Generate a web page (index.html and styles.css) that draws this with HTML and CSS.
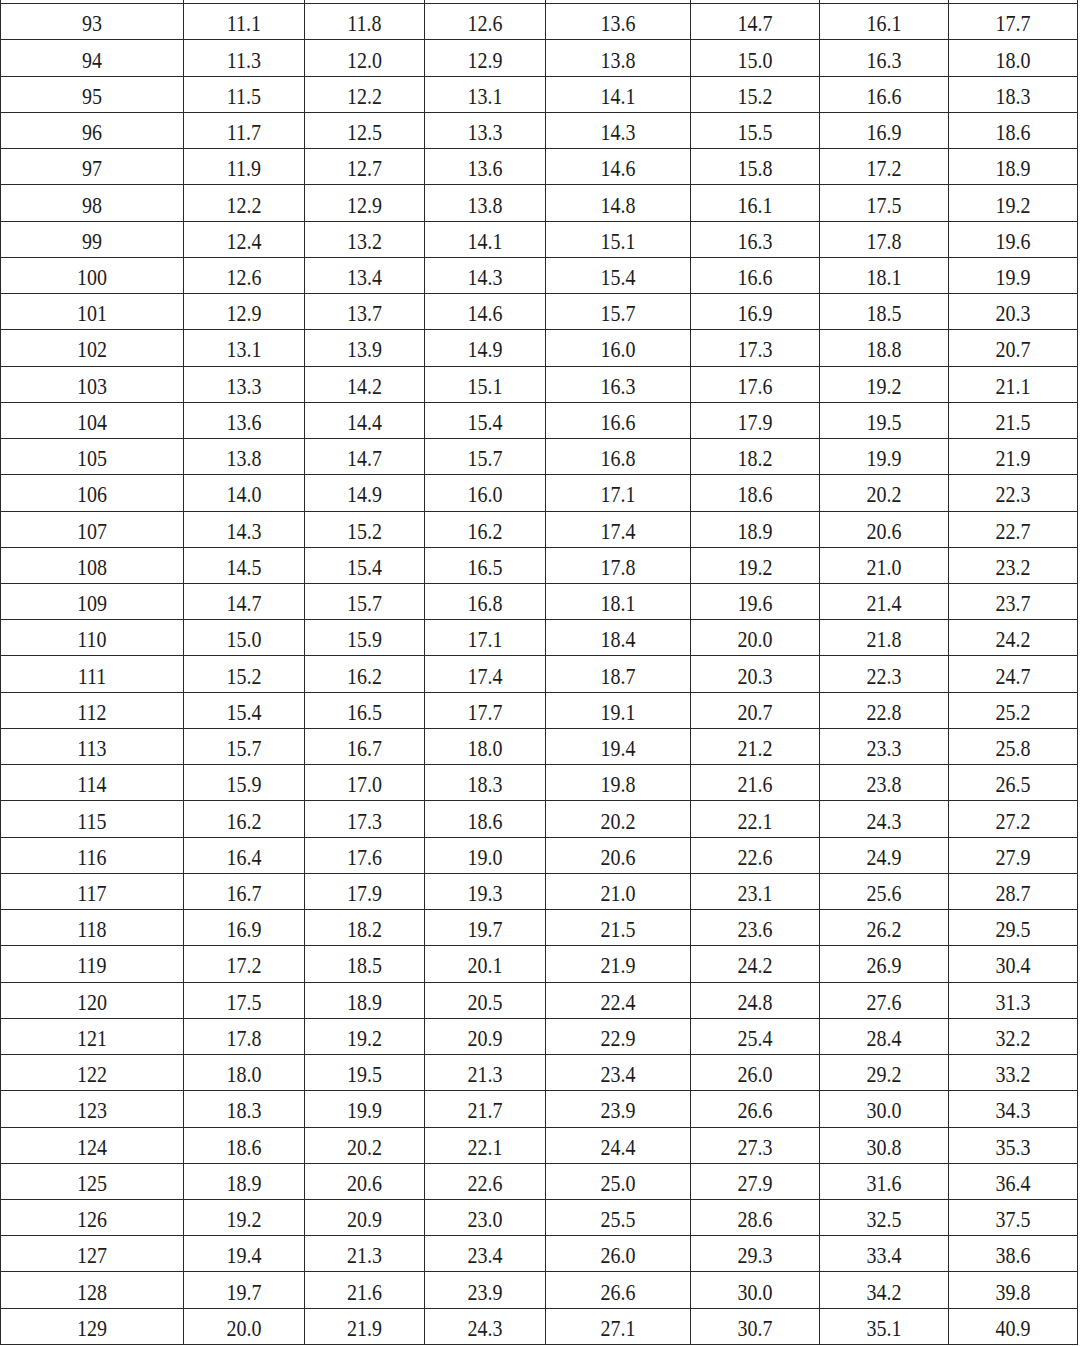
FILE: index.html
```html
<!DOCTYPE html>
<html>
<head>
<meta charset="utf-8">
<link rel="stylesheet" href="styles.css">
</head>
<body>
<div class="table">
<div class="c"></div><div class="c"></div><div class="c"></div><div class="c"></div><div class="c"></div><div class="c"></div><div class="c"></div><div class="c"></div>
<div class="c"><span>93</span></div><div class="c"><span>11.1</span></div><div class="c"><span>11.8</span></div><div class="c"><span>12.6</span></div><div class="c"><span>13.6</span></div><div class="c"><span>14.7</span></div><div class="c"><span>16.1</span></div><div class="c"><span>17.7</span></div>
<div class="c"><span>94</span></div><div class="c"><span>11.3</span></div><div class="c"><span>12.0</span></div><div class="c"><span>12.9</span></div><div class="c"><span>13.8</span></div><div class="c"><span>15.0</span></div><div class="c"><span>16.3</span></div><div class="c"><span>18.0</span></div>
<div class="c"><span>95</span></div><div class="c"><span>11.5</span></div><div class="c"><span>12.2</span></div><div class="c"><span>13.1</span></div><div class="c"><span>14.1</span></div><div class="c"><span>15.2</span></div><div class="c"><span>16.6</span></div><div class="c"><span>18.3</span></div>
<div class="c"><span>96</span></div><div class="c"><span>11.7</span></div><div class="c"><span>12.5</span></div><div class="c"><span>13.3</span></div><div class="c"><span>14.3</span></div><div class="c"><span>15.5</span></div><div class="c"><span>16.9</span></div><div class="c"><span>18.6</span></div>
<div class="c"><span>97</span></div><div class="c"><span>11.9</span></div><div class="c"><span>12.7</span></div><div class="c"><span>13.6</span></div><div class="c"><span>14.6</span></div><div class="c"><span>15.8</span></div><div class="c"><span>17.2</span></div><div class="c"><span>18.9</span></div>
<div class="c"><span>98</span></div><div class="c"><span>12.2</span></div><div class="c"><span>12.9</span></div><div class="c"><span>13.8</span></div><div class="c"><span>14.8</span></div><div class="c"><span>16.1</span></div><div class="c"><span>17.5</span></div><div class="c"><span>19.2</span></div>
<div class="c"><span>99</span></div><div class="c"><span>12.4</span></div><div class="c"><span>13.2</span></div><div class="c"><span>14.1</span></div><div class="c"><span>15.1</span></div><div class="c"><span>16.3</span></div><div class="c"><span>17.8</span></div><div class="c"><span>19.6</span></div>
<div class="c"><span>100</span></div><div class="c"><span>12.6</span></div><div class="c"><span>13.4</span></div><div class="c"><span>14.3</span></div><div class="c"><span>15.4</span></div><div class="c"><span>16.6</span></div><div class="c"><span>18.1</span></div><div class="c"><span>19.9</span></div>
<div class="c"><span>101</span></div><div class="c"><span>12.9</span></div><div class="c"><span>13.7</span></div><div class="c"><span>14.6</span></div><div class="c"><span>15.7</span></div><div class="c"><span>16.9</span></div><div class="c"><span>18.5</span></div><div class="c"><span>20.3</span></div>
<div class="c"><span>102</span></div><div class="c"><span>13.1</span></div><div class="c"><span>13.9</span></div><div class="c"><span>14.9</span></div><div class="c"><span>16.0</span></div><div class="c"><span>17.3</span></div><div class="c"><span>18.8</span></div><div class="c"><span>20.7</span></div>
<div class="c"><span>103</span></div><div class="c"><span>13.3</span></div><div class="c"><span>14.2</span></div><div class="c"><span>15.1</span></div><div class="c"><span>16.3</span></div><div class="c"><span>17.6</span></div><div class="c"><span>19.2</span></div><div class="c"><span>21.1</span></div>
<div class="c"><span>104</span></div><div class="c"><span>13.6</span></div><div class="c"><span>14.4</span></div><div class="c"><span>15.4</span></div><div class="c"><span>16.6</span></div><div class="c"><span>17.9</span></div><div class="c"><span>19.5</span></div><div class="c"><span>21.5</span></div>
<div class="c"><span>105</span></div><div class="c"><span>13.8</span></div><div class="c"><span>14.7</span></div><div class="c"><span>15.7</span></div><div class="c"><span>16.8</span></div><div class="c"><span>18.2</span></div><div class="c"><span>19.9</span></div><div class="c"><span>21.9</span></div>
<div class="c"><span>106</span></div><div class="c"><span>14.0</span></div><div class="c"><span>14.9</span></div><div class="c"><span>16.0</span></div><div class="c"><span>17.1</span></div><div class="c"><span>18.6</span></div><div class="c"><span>20.2</span></div><div class="c"><span>22.3</span></div>
<div class="c"><span>107</span></div><div class="c"><span>14.3</span></div><div class="c"><span>15.2</span></div><div class="c"><span>16.2</span></div><div class="c"><span>17.4</span></div><div class="c"><span>18.9</span></div><div class="c"><span>20.6</span></div><div class="c"><span>22.7</span></div>
<div class="c"><span>108</span></div><div class="c"><span>14.5</span></div><div class="c"><span>15.4</span></div><div class="c"><span>16.5</span></div><div class="c"><span>17.8</span></div><div class="c"><span>19.2</span></div><div class="c"><span>21.0</span></div><div class="c"><span>23.2</span></div>
<div class="c"><span>109</span></div><div class="c"><span>14.7</span></div><div class="c"><span>15.7</span></div><div class="c"><span>16.8</span></div><div class="c"><span>18.1</span></div><div class="c"><span>19.6</span></div><div class="c"><span>21.4</span></div><div class="c"><span>23.7</span></div>
<div class="c"><span>110</span></div><div class="c"><span>15.0</span></div><div class="c"><span>15.9</span></div><div class="c"><span>17.1</span></div><div class="c"><span>18.4</span></div><div class="c"><span>20.0</span></div><div class="c"><span>21.8</span></div><div class="c"><span>24.2</span></div>
<div class="c"><span>111</span></div><div class="c"><span>15.2</span></div><div class="c"><span>16.2</span></div><div class="c"><span>17.4</span></div><div class="c"><span>18.7</span></div><div class="c"><span>20.3</span></div><div class="c"><span>22.3</span></div><div class="c"><span>24.7</span></div>
<div class="c"><span>112</span></div><div class="c"><span>15.4</span></div><div class="c"><span>16.5</span></div><div class="c"><span>17.7</span></div><div class="c"><span>19.1</span></div><div class="c"><span>20.7</span></div><div class="c"><span>22.8</span></div><div class="c"><span>25.2</span></div>
<div class="c"><span>113</span></div><div class="c"><span>15.7</span></div><div class="c"><span>16.7</span></div><div class="c"><span>18.0</span></div><div class="c"><span>19.4</span></div><div class="c"><span>21.2</span></div><div class="c"><span>23.3</span></div><div class="c"><span>25.8</span></div>
<div class="c"><span>114</span></div><div class="c"><span>15.9</span></div><div class="c"><span>17.0</span></div><div class="c"><span>18.3</span></div><div class="c"><span>19.8</span></div><div class="c"><span>21.6</span></div><div class="c"><span>23.8</span></div><div class="c"><span>26.5</span></div>
<div class="c"><span>115</span></div><div class="c"><span>16.2</span></div><div class="c"><span>17.3</span></div><div class="c"><span>18.6</span></div><div class="c"><span>20.2</span></div><div class="c"><span>22.1</span></div><div class="c"><span>24.3</span></div><div class="c"><span>27.2</span></div>
<div class="c"><span>116</span></div><div class="c"><span>16.4</span></div><div class="c"><span>17.6</span></div><div class="c"><span>19.0</span></div><div class="c"><span>20.6</span></div><div class="c"><span>22.6</span></div><div class="c"><span>24.9</span></div><div class="c"><span>27.9</span></div>
<div class="c"><span>117</span></div><div class="c"><span>16.7</span></div><div class="c"><span>17.9</span></div><div class="c"><span>19.3</span></div><div class="c"><span>21.0</span></div><div class="c"><span>23.1</span></div><div class="c"><span>25.6</span></div><div class="c"><span>28.7</span></div>
<div class="c"><span>118</span></div><div class="c"><span>16.9</span></div><div class="c"><span>18.2</span></div><div class="c"><span>19.7</span></div><div class="c"><span>21.5</span></div><div class="c"><span>23.6</span></div><div class="c"><span>26.2</span></div><div class="c"><span>29.5</span></div>
<div class="c"><span>119</span></div><div class="c"><span>17.2</span></div><div class="c"><span>18.5</span></div><div class="c"><span>20.1</span></div><div class="c"><span>21.9</span></div><div class="c"><span>24.2</span></div><div class="c"><span>26.9</span></div><div class="c"><span>30.4</span></div>
<div class="c"><span>120</span></div><div class="c"><span>17.5</span></div><div class="c"><span>18.9</span></div><div class="c"><span>20.5</span></div><div class="c"><span>22.4</span></div><div class="c"><span>24.8</span></div><div class="c"><span>27.6</span></div><div class="c"><span>31.3</span></div>
<div class="c"><span>121</span></div><div class="c"><span>17.8</span></div><div class="c"><span>19.2</span></div><div class="c"><span>20.9</span></div><div class="c"><span>22.9</span></div><div class="c"><span>25.4</span></div><div class="c"><span>28.4</span></div><div class="c"><span>32.2</span></div>
<div class="c"><span>122</span></div><div class="c"><span>18.0</span></div><div class="c"><span>19.5</span></div><div class="c"><span>21.3</span></div><div class="c"><span>23.4</span></div><div class="c"><span>26.0</span></div><div class="c"><span>29.2</span></div><div class="c"><span>33.2</span></div>
<div class="c"><span>123</span></div><div class="c"><span>18.3</span></div><div class="c"><span>19.9</span></div><div class="c"><span>21.7</span></div><div class="c"><span>23.9</span></div><div class="c"><span>26.6</span></div><div class="c"><span>30.0</span></div><div class="c"><span>34.3</span></div>
<div class="c"><span>124</span></div><div class="c"><span>18.6</span></div><div class="c"><span>20.2</span></div><div class="c"><span>22.1</span></div><div class="c"><span>24.4</span></div><div class="c"><span>27.3</span></div><div class="c"><span>30.8</span></div><div class="c"><span>35.3</span></div>
<div class="c"><span>125</span></div><div class="c"><span>18.9</span></div><div class="c"><span>20.6</span></div><div class="c"><span>22.6</span></div><div class="c"><span>25.0</span></div><div class="c"><span>27.9</span></div><div class="c"><span>31.6</span></div><div class="c"><span>36.4</span></div>
<div class="c"><span>126</span></div><div class="c"><span>19.2</span></div><div class="c"><span>20.9</span></div><div class="c"><span>23.0</span></div><div class="c"><span>25.5</span></div><div class="c"><span>28.6</span></div><div class="c"><span>32.5</span></div><div class="c"><span>37.5</span></div>
<div class="c"><span>127</span></div><div class="c"><span>19.4</span></div><div class="c"><span>21.3</span></div><div class="c"><span>23.4</span></div><div class="c"><span>26.0</span></div><div class="c"><span>29.3</span></div><div class="c"><span>33.4</span></div><div class="c"><span>38.6</span></div>
<div class="c"><span>128</span></div><div class="c"><span>19.7</span></div><div class="c"><span>21.6</span></div><div class="c"><span>23.9</span></div><div class="c"><span>26.6</span></div><div class="c"><span>30.0</span></div><div class="c"><span>34.2</span></div><div class="c"><span>39.8</span></div>
<div class="c"><span>129</span></div><div class="c"><span>20.0</span></div><div class="c"><span>21.9</span></div><div class="c"><span>24.3</span></div><div class="c"><span>27.1</span></div><div class="c"><span>30.7</span></div><div class="c"><span>35.1</span></div><div class="c"><span>40.9</span></div>
</div>
</body>
</html>
```
FILE: styles.css
```css
html, body {
  margin: 0;
  padding: 0;
  background: #ffffff;
}
body {
  width: 1080px;
  height: 1346px;
  overflow: hidden;
}
.table {
  display: grid;
  grid-template-columns: 183px 121px 120px 121px 145px 129px 129px 129px;
  grid-auto-rows: 36.24px;
  margin-top: -32px;
  border-left: 1px solid #2a2a2a;
  width: 1077px;
  font-family: "Liberation Serif", "Times New Roman", serif;
  font-size: 20px;
  color: #1c1c1c;
}
.c {
  display: flex;
  align-items: center;
  justify-content: center;
  border-right: 1px solid #2a2a2a;
  border-bottom: 1px solid #2a2a2a;
  box-sizing: border-box;
  padding-top: 3px;
}
.c span {
  display: inline-block;
  line-height: 1;
  transform: scaleY(1.16);
}
```
